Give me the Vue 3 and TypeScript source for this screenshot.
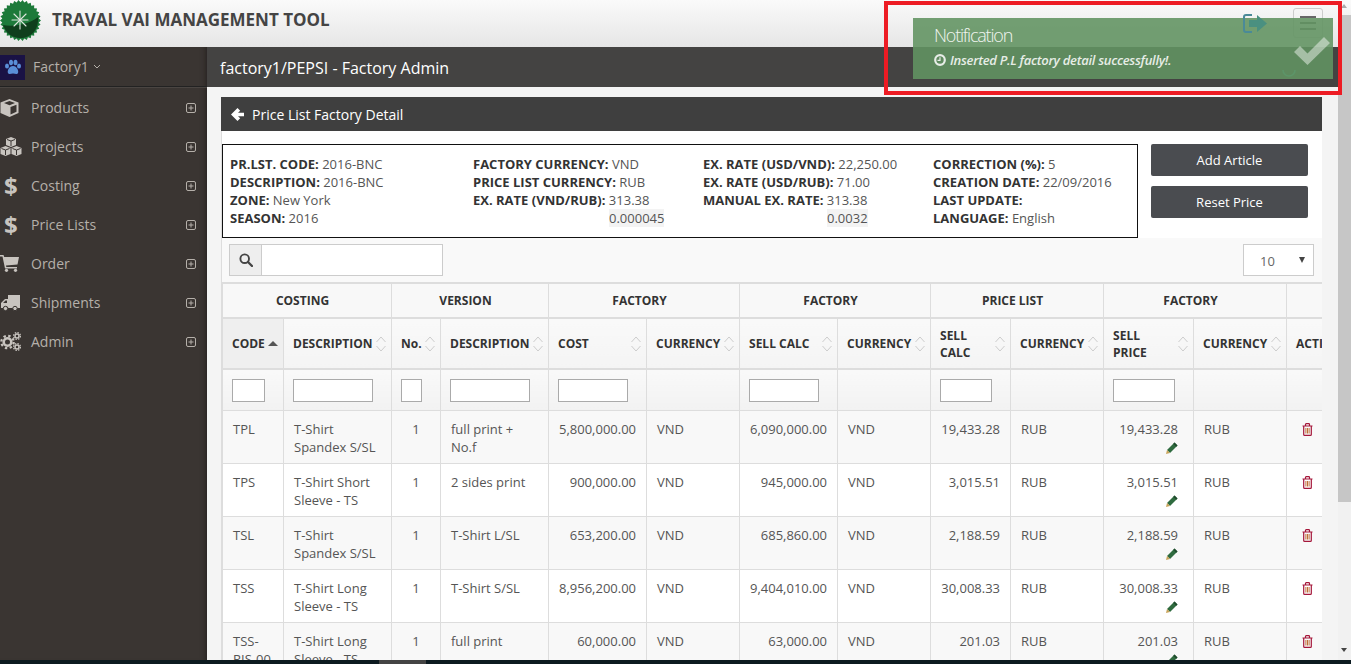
<template>
  <div class="app">
    <header class="topbar">
      <svg class="logo" width="41" height="41" viewBox="0 0 41 41">
        <path :d="logoPath" fill="#1d7a3a" />
        <path d="M3 25C12 27 28 25 38 17C39 30 31 38 20 38C12 38 6 33 3 25Z" fill="#0f3f1c" />
        <g stroke="#dfe6df" stroke-width="1.1" stroke-linecap="round">
          <line x1="20" y1="11" x2="20" y2="29" />
          <line x1="12" y1="20" x2="28" y2="20" />
          <line x1="14" y1="14" x2="26" y2="26" />
          <line x1="26" y1="14" x2="14" y2="26" />
        </g>
      </svg>
      <span class="brand">TRAVAL VAI MANAGEMENT TOOL</span>
      <svg class="signout" width="26" height="22" viewBox="0 0 26 22">
        <path d="M10 2H4Q2 2 2 4V17Q2 19 4 19H10" fill="none" stroke="#4a8a98" stroke-width="2" />
        <path d="M7 7H15V2L25 10.5L15 19V14H7Z" fill="#4a9080" />
      </svg>
      <div class="burger"><i></i><i></i><i></i></div>
    </header>

    <div class="body">
      <aside class="sidebar">
        <div class="account">
          <svg class="avatar" width="25" height="25" viewBox="0 0 25 25">
            <rect width="25" height="25" fill="#1a1245" />
            <g fill="#5a8fd8">
              <ellipse cx="7" cy="11" rx="2" ry="2.6" />
              <ellipse cx="11" cy="7.5" rx="2" ry="2.8" />
              <ellipse cx="15.5" cy="7.5" rx="2" ry="2.8" />
              <ellipse cx="19" cy="11" rx="2" ry="2.6" />
              <path d="M13 11C17 11 19 16 18 18C17 20 15 18.500 13 18.500C11 18.500 9 20 8 18C7 16 9 11 13 11Z" />
            </g>
          </svg>
          <span class="account-name">Factory1</span>
          <svg width="8" height="6" viewBox="0 0 8 6"><path d="M1 1L4 4L7 1" fill="none" stroke="#b5b0aa" stroke-width="1" /></svg>
        </div>
        <nav class="menu">
          <div v-for="item in menu" :key="item.label" class="menu-item">
            <span class="menu-icon">
              <svg v-if="item.icon === 'cube'" width="19" height="18" viewBox="0 0 19 18">
                <path fill-rule="evenodd" d="M9.500 0L18.500 3.500V14L9.500 18L.5 14V3.500ZM9.500 2L4 4L9.500 6.200L15 4ZM10.500 8V15.500L16.500 12.800V5.700Z" fill="#c8c4bf" />
              </svg>
              <svg v-else-if="item.icon === 'cubes'" width="22" height="19" viewBox="0 0 22 19">
                <g fill="#c8c4bf">
                  <path d="M11 0L16 2V8L11 10L6 8V2Z" />
                  <path d="M5.500 9L10.500 11V17L5.500 19L.5 17V11Z" />
                  <path d="M16.500 9L21.500 11V17L16.500 19L11.500 17V11Z" />
                </g>
                <g fill="none" stroke="#3a3532" stroke-width="1">
                  <path d="M7 2.500L11 4L15 2.500M11 4V9" />
                  <path d="M1.500 11.500L5.500 13L9.500 11.500M5.500 13V18" />
                  <path d="M12.500 11.500L16.500 13L20.500 11.500M16.500 13V18" />
                </g>
              </svg>
              <span v-else-if="item.icon === 'dollar'" class="dollar">$</span>
              <svg v-else-if="item.icon === 'cart'" width="19" height="17" viewBox="0 0 19 17">
                <path d="M0 0H3.500L4.200 2H19L17.500 9.500L6 10.500L6.300 12H17V13.500H5L2.500 1.500H0Z" fill="#c8c4bf" />
                <circle cx="6.500" cy="15.300" r="1.600" fill="#c8c4bf" />
                <circle cx="15.500" cy="15.300" r="1.600" fill="#c8c4bf" />
              </svg>
              <svg v-else-if="item.icon === 'truck'" width="20" height="16" viewBox="0 0 20 16">
                <path d="M8 0H20V13H8.500A3 3 0 0 0 3 13H1V8L5 4H8ZM3 8H7V5.500H5.500Z" fill="#c8c4bf" fill-rule="evenodd" />
                <circle cx="5.500" cy="13.500" r="2.200" fill="#c8c4bf" stroke="#3a3532" />
                <circle cx="15" cy="13.500" r="2.200" fill="#c8c4bf" stroke="#3a3532" />
              </svg>
              <svg v-else width="21" height="19" viewBox="0 0 21 19">
                <g fill="none" stroke="#c8c4bf">
                  <circle cx="7.500" cy="10" r="3.800" stroke-width="2.600" />
                  <circle cx="7.500" cy="10" r="6.200" stroke-width="2.200" stroke-dasharray="2.400 2.470" />
                  <circle cx="17" cy="4" r="2" stroke-width="1.500" />
                  <circle cx="17" cy="4" r="3.400" stroke-width="1.300" stroke-dasharray="1.500 1.170" />
                  <circle cx="17" cy="15" r="2" stroke-width="1.500" />
                  <circle cx="17" cy="15" r="3.400" stroke-width="1.300" stroke-dasharray="1.500 1.170" />
                </g>
              </svg>
            </span>
            <span class="menu-label">{{ item.label }}</span>
            <svg width="10" height="10" viewBox="0 0 10 10">
              <rect x=".5" y=".5" width="9" height="9" rx="1.500" fill="none" stroke="#b5b0aa" />
              <path d="M2.500 5H7.500M5 2.500V7.500" stroke="#b5b0aa" />
            </svg>
          </div>
        </nav>
      </aside>

      <main class="main">
        <div class="page-title">
          factory1/PEPSI - Factory Admin
          <svg class="spinner" width="16" height="16" viewBox="0 0 16 16">
            <path d="M2 8A6 6 0 0 0 14 8" fill="none" stroke="#2fa0a0" stroke-width="1.500" />
          </svg>
        </div>
        <div class="content">
          <section class="panel">
            <div class="panel-head">
              <svg width="13" height="13" viewBox="0 0 13 13">
                <path d="M6.500 0L9.200 2.700L7 4.700H13V8.300H7L9.200 10.300L6.500 13L0 6.500Z" fill="#fff" />
              </svg>
              <span>Price List Factory Detail</span>
            </div>
            <div class="summary">
              <div class="info-box">
                <div v-for="(col, i) in infoCols" :key="i" class="info-col">
                  <div v-for="line in col" :key="line.key" class="info-line" :class="{ muted: !line.key.trim() }">
                    <template v-if="line.key.trim()"><b>{{ line.key }}:</b> {{ line.value }}</template>
                    <span v-else class="rate" :style="{ marginLeft: line.offset + 'px' }">{{ line.value }}</span>
                  </div>
                </div>
              </div>
              <div class="actions">
                <button class="btn">Add Article</button>
                <button class="btn">Reset Price</button>
              </div>
            </div>
            <div class="toolbar">
              <div class="search">
                <span class="search-addon">
                  <svg width="14" height="14" viewBox="0 0 14 14">
                    <circle cx="5.700" cy="5.700" r="4.300" fill="none" stroke="#444" stroke-width="1.900" />
                    <path d="M9 9L13 13" stroke="#444" stroke-width="2.300" stroke-linecap="round" />
                  </svg>
                </span>
                <span class="search-input"></span>
              </div>
              <div class="page-size"><span>10</span><i></i></div>
            </div>
            <div class="table-wrap">
              <table class="grid">
                <colgroup>
                  <col v-for="(w, i) in colWidths" :key="i" :style="{ width: w + 'px' }" />
                </colgroup>
                <thead>
                  <tr class="group-row">
                    <th v-for="g in groups" :key="g.label + g.span" :colspan="g.span">{{ g.label }}</th>
                  </tr>
                  <tr class="head-row">
                    <th v-for="(c, i) in columns" :key="i" :class="{ sorted: c.sorted }">
                      <div class="th-inner">
                        <span class="th-label">{{ c.label }}</span>
                        <i v-if="c.sorted" class="sort-up"></i>
                        <svg v-else-if="!c.noSort" width="10" height="20" viewBox="0 0 10 20">
                          <path d="M.5 8L5 3L9.500 8M.5 12L5 17L9.500 12" fill="none" stroke="#ccc" />
                        </svg>
                      </div>
                    </th>
                  </tr>
                  <tr class="filter-row">
                    <td v-for="(c, i) in columns" :key="i">
                      <span v-if="c.filter" class="filter" :style="{ width: c.filter + 'px' }"></span>
                    </td>
                  </tr>
                </thead>
                <tbody>
                  <tr v-for="row in rows" :key="row.code">
                    <td class="code">{{ row.code }}</td>
                    <td>{{ row.desc }}</td>
                    <td class="center">1</td>
                    <td>{{ row.version }}</td>
                    <td class="num">{{ row.cost }}</td>
                    <td>VND</td>
                    <td class="num">{{ row.sell }}</td>
                    <td>VND</td>
                    <td class="num">{{ row.list }}</td>
                    <td>RUB</td>
                    <td class="num price">
                      {{ row.list }}
                      <svg class="pencil" width="12" height="12" viewBox="0 0 12 12">
                        <path d="M8.500 .5L11.500 3.500L4 11L1 8Z" fill="#2f6b3f" />
                        <path d="M8.500 .5L11.500 3.500L10.300 4.700L7.300 1.700Z" fill="#1f4a2c" />
                        <path d="M1 8L4 11L0 12Z" fill="#c9a45a" />
                      </svg>
                    </td>
                    <td>RUB</td>
                    <td class="action">
                      <svg width="11" height="13" viewBox="0 0 11 13">
                        <path d="M.5 3H10.500M3.500 3V1.500Q3.500 .7 4.300 .7H6.700Q7.500 .7 7.500 1.500V3M1.700 3V11.500Q1.700 12.400 2.600 12.400H8.400Q9.300 12.400 9.300 11.500V3" fill="none" stroke="#a5173a" stroke-width="1.200" />
                        <path d="M3.900 5V10.500M5.500 5V10.500M7.100 5V10.500" stroke="#c0703a" />
                      </svg>
                    </td>
                  </tr>
                </tbody>
              </table>
            </div>
          </section>
        </div>
      </main>
      <div class="scrollbar">
        <i class="arrow-up"></i>
        <div class="thumb"></div>
        <i class="arrow-down"></i>
      </div>
    </div>
    <div class="bottom-bar"><div class="bottom-thumb"></div></div>

    <div class="notify">
      <div class="notify-title">Notification</div>
      <div class="notify-text">
        <svg width="12" height="12" viewBox="0 0 12 12">
          <circle cx="6" cy="6" r="4.800" fill="none" stroke="#fff" stroke-width="2.200" />
          <path d="M6 3.200V6.300H3.500" fill="none" stroke="#fff" stroke-width="1.200" />
        </svg>
        <em>Inserted P.L factory detail successfully!.</em>
      </div>
      <svg class="notify-check" width="36" height="28" viewBox="0 0 36 28">
        <path d="M0 15L6 9L13.500 16.500L30 0L36 6L13.500 28Z" fill="#fff" fill-opacity=".45" />
      </svg>
    </div>
    <div class="highlight"></div>
  </div>
</template>

<script setup lang="ts">
interface Row {
  code: string;
  desc: string;
  version: string;
  cost: string;
  sell: string;
  list: string;
}

interface Column {
  label: string;
  filter?: number;
  sorted?: boolean;
  noSort?: boolean;
}

const menu = [
  { label: 'Products', icon: 'cube' },
  { label: 'Projects', icon: 'cubes' },
  { label: 'Costing', icon: 'dollar' },
  { label: 'Price Lists', icon: 'dollar' },
  { label: 'Order', icon: 'cart' },
  { label: 'Shipments', icon: 'truck' },
  { label: 'Admin', icon: 'cogs' },
];

const infoCols = [
  [
    { key: 'PR.LST. CODE', value: '2016-BNC', offset: 0 },
    { key: 'DESCRIPTION', value: '2016-BNC', offset: 0 },
    { key: 'ZONE', value: 'New York', offset: 0 },
    { key: 'SEASON', value: '2016', offset: 0 },
  ],
  [
    { key: 'FACTORY CURRENCY', value: 'VND', offset: 0 },
    { key: 'PRICE LIST CURRENCY', value: 'RUB', offset: 0 },
    { key: 'EX. RATE (VND/RUB)', value: '313.38', offset: 0 },
    { key: ' ', value: '0.000045', offset: 136 },
  ],
  [
    { key: 'EX. RATE (USD/VND)', value: '22,250.00', offset: 0 },
    { key: 'EX. RATE (USD/RUB)', value: '71.00', offset: 0 },
    { key: 'MANUAL EX. RATE', value: '313.38', offset: 0 },
    { key: ' ', value: '0.0032', offset: 124 },
  ],
  [
    { key: 'CORRECTION (%)', value: '5', offset: 0 },
    { key: 'CREATION DATE', value: '22/09/2016', offset: 0 },
    { key: 'LAST UPDATE', value: '', offset: 0 },
    { key: 'LANGUAGE', value: 'English', offset: 0 },
  ],
];

const colWidths = [61, 108, 49, 108, 98, 93, 98, 93, 80, 93, 90, 93, 70];

const groups = [
  { label: 'COSTING', span: 2 },
  { label: 'VERSION', span: 2 },
  { label: 'FACTORY', span: 2 },
  { label: 'FACTORY', span: 2 },
  { label: 'PRICE LIST', span: 2 },
  { label: 'FACTORY', span: 2 },
  { label: '', span: 1 },
];

const columns: Column[] = [
  { label: 'CODE', filter: 33, sorted: true },
  { label: 'DESCRIPTION', filter: 80 },
  { label: 'No.', filter: 21 },
  { label: 'DESCRIPTION', filter: 80 },
  { label: 'COST', filter: 70 },
  { label: 'CURRENCY' },
  { label: 'SELL CALC', filter: 70 },
  { label: 'CURRENCY' },
  { label: 'SELL\nCALC', filter: 52 },
  { label: 'CURRENCY' },
  { label: 'SELL\nPRICE', filter: 62 },
  { label: 'CURRENCY' },
  { label: 'ACTIONS', noSort: true },
];

const rows: Row[] = [
  { code: 'TPL', desc: 'T-Shirt Spandex S/SL', version: 'full print + No.f', cost: '5,800,000.00', sell: '6,090,000.00', list: '19,433.28' },
  { code: 'TPS', desc: 'T-Shirt Short Sleeve - TS', version: '2 sides print', cost: '900,000.00', sell: '945,000.00', list: '3,015.51' },
  { code: 'TSL', desc: 'T-Shirt Spandex S/SL', version: 'T-Shirt L/SL', cost: '653,200.00', sell: '685,860.00', list: '2,188.59' },
  { code: 'TSS', desc: 'T-Shirt Long Sleeve - TS', version: 'T-Shirt S/SL', cost: '8,956,200.00', sell: '9,404,010.00', list: '30,008.33' },
  { code: 'TSS-\nRIS-00', desc: 'T-Shirt Long Sleeve - TS', version: 'full print', cost: '60,000.00', sell: '63,000.00', list: '201.03' },
];

// 徽章外圈的锯齿
const logoPath = (() => {
  const teeth = 30;
  const pts: string[] = [];
  for (let i = 0; i < teeth * 2; i++) {
    const r = i % 2 === 0 ? 20.5 : 18.3;
    const a = (i / (teeth * 2)) * Math.PI * 2;
    pts.push(`${(20.5 + r * Math.cos(a)).toFixed(2)} ${(20.5 + r * Math.sin(a)).toFixed(2)}`);
  }
  return 'M' + pts.join('L') + 'Z';
})();
</script>

<style scoped>
.app {
  position: relative;
  display: flex;
  flex-direction: column;
  width: 1351px;
  height: 664px;
  overflow: hidden;
  font-family: "Open Sans", "Liberation Sans", sans-serif;
  font-size: 13px;
  color: #555;
}

.topbar {
  position: relative;
  flex: none;
  display: flex;
  align-items: flex-start;
  height: 47px;
  background: linear-gradient(#fafafa, #e6e6e6);
}

.logo {
  flex: none;
}

.brand {
  margin: 9px 0 0 11px;
  font-size: 17px;
  line-height: 22px;
  font-weight: 700;
  color: #444;
}

.signout {
  position: relative;
  z-index: 1;
  margin: 13px 0 0 auto;
}

.burger {
  display: flex;
  flex-direction: column;
  justify-content: center;
  gap: 4px;
  width: 30px;
  height: 30px;
  box-sizing: border-box;
  margin: 8px 28px 0 25px;
  padding: 0 6px;
  border: 1px solid #ccc;
  border-radius: 3px;
}

.burger i {
  display: block;
  height: 2px;
  background: #666;
}

.body {
  flex: 1;
  display: flex;
  min-height: 0;
}

.sidebar {
  flex: none;
  width: 207px;
  background: #3a3532;
  box-shadow: inset -6px 0 6px -6px #1e1b19;
  color: #b5b0aa;
  font-size: 14px;
}

.account {
  display: flex;
  align-items: center;
  gap: 8px;
  height: 40px;
  box-sizing: border-box;
  border-bottom: 1px solid #222;
  box-shadow: 0 1px 0 #4a4542;
}

.avatar {
  margin-top: 2px;
}

.account-name {
  margin-right: -4px;
}

.menu {
  padding-top: 1px;
}

.menu-item {
  display: flex;
  align-items: center;
  height: 39px;
  padding-right: 11px;
}

.menu-icon {
  flex: none;
  display: flex;
  align-items: center;
  justify-content: flex-start;
  width: 31px;
}

.dollar {
  margin-left: 4px;
  font-size: 24px;
  line-height: 24px;
  font-weight: 700;
  color: #c8c4bf;
}

.menu-label {
  flex: 1;
}

.main {
  flex: 1;
  min-width: 0;
  display: flex;
  flex-direction: column;
}

.page-title {
  position: relative;
  flex: none;
  height: 40px;
  padding-left: 13px;
  background: #444342;
  color: #fff;
  font-size: 16px;
  line-height: 42px;
}

.spinner {
  position: absolute;
  right: 41px;
  top: 15px;
}

.content {
  flex: 1;
  min-height: 0;
  padding: 10px 16px 0 14px;
  background: #f4f4f4;
  overflow: hidden;
}

.panel {
  display: flex;
  flex-direction: column;
  background: #fff;
  border-left: 1px solid #ddd;
}

.panel-head {
  display: flex;
  align-items: center;
  gap: 8px;
  height: 34px;
  margin-left: -1px;
  padding-left: 10px;
  background: #3f3f3f;
  color: #fff;
  font-size: 14px;
}

.summary {
  display: flex;
  gap: 13px;
  padding: 13px 14px 0 0;
}

.info-box {
  flex: 1;
  display: grid;
  grid-template-columns: 243px 230px 230px 1fr;
  padding: 10px 7px;
  border: 1px solid #111;
  line-height: 18px;
  color: #555;
}

.info-line {
  height: 18px;
  white-space: nowrap;
}

.info-line b {
  color: #333;
}

.rate {
  display: inline-block;
  background: #f3f3f3;
}

.actions {
  flex: none;
  display: flex;
  flex-direction: column;
  gap: 10px;
  width: 157px;
}

.btn {
  height: 32px;
  padding: 0;
  border: none;
  border-radius: 2px;
  background: #4a4c50;
  color: #fff;
  font: inherit;
}

.toolbar {
  display: flex;
  justify-content: space-between;
  height: 45px;
  box-sizing: border-box;
  padding: 6px 8px 0 7px;
  background: #f9f9f9;
  border-bottom: 1px solid #ddd;
}

.search {
  display: flex;
  width: 214px;
  height: 32px;
  box-sizing: border-box;
  border: 1px solid #ccc;
  background: #fff;
}

.search-addon {
  display: flex;
  align-items: center;
  justify-content: center;
  width: 31px;
  background: #eee;
  border-right: 1px solid #ccc;
}

.search-input {
  flex: 1;
}

.page-size {
  position: relative;
  width: 71px;
  height: 32px;
  box-sizing: border-box;
  padding-left: 16px;
  border: 1px solid #ccc;
  background: #fff;
  line-height: 33px;
  color: #666;
}

.page-size i {
  position: absolute;
  right: 8px;
  top: 12px;
  border-left: 3px solid transparent;
  border-right: 3px solid transparent;
  border-top: 6px solid #444;
}

.table-wrap {
  overflow: hidden;
}

.grid {
  width: 1134px;
  table-layout: fixed;
  border-collapse: collapse;
  background: #fff;
}

.grid th {
  padding: 0;
  border: 1px solid #ddd;
  border-bottom-width: 2px;
  color: #333;
  font-size: 12px;
  line-height: 17px;
  font-weight: 700;
}

.group-row th {
  height: 33px;
  padding-right: 9px;
  background: #f8f8f8;
  text-align: center;
}

.head-row th {
  height: 49px;
  background: linear-gradient(#f9f9f9, #f4f4f4);
  text-align: left;
}

.head-row th.sorted {
  background: #efefef;
}

.th-inner {
  display: flex;
  align-items: center;
  justify-content: space-between;
  padding: 0 5px 0 9px;
}

.th-label {
  white-space: pre-line;
}

.th-inner svg {
  flex: none;
}

.sort-up {
  flex: none;
  margin-right: 0;
  border-left: 5px solid transparent;
  border-right: 5px solid transparent;
  border-bottom: 5px solid #555;
}

.filter-row td {
  height: 41px;
  padding: 2px 0 0 9px;
  background: linear-gradient(#f9f9f9, #f2f2f2);
  border-bottom-width: 2px;
}

.filter {
  display: block;
  height: 23px;
  box-sizing: border-box;
  border: 1px solid #aaa;
  background: #fff;
}

.grid td {
  border: 1px solid #ddd;
  box-sizing: border-box;
  line-height: 18px;
}

tbody td {
  height: 53px;
  padding: 9px 10px 7px;
  vertical-align: top;
}

tbody tr:nth-child(odd) td {
  background: #f8f8f8;
}

tbody td.code {
  white-space: pre;
}

tbody td.center {
  text-align: center;
}

tbody td.num {
  text-align: right;
}

tbody td.price {
  padding-right: 15px;
}

.pencil {
  display: block;
  margin: 4px 0 0 auto;
}

tbody td.action {
  padding-top: 12px;
  padding-left: 15px;
}

.action svg {
  display: block;
}

.scrollbar {
  position: relative;
  flex: none;
  width: 13px;
  background: #f1f1f1;
}

.thumb {
  position: absolute;
  left: 0;
  right: 0;
  top: -32px;
  height: 487px;
  background: #c6c6c6;
}

.arrow-up,
.arrow-down {
  position: absolute;
  left: 3px;
  border-left: 3.500px solid transparent;
  border-right: 3.500px solid transparent;
}

.arrow-up {
  top: -43px;
  border-bottom: 4px solid #aaa;
}

.arrow-down {
  bottom: 8px;
  border-top: 4px solid #444;
}

.bottom-bar {
  flex: none;
  height: 4px;
  background: #0c1a20;
}

.bottom-thumb {
  width: 47px;
  height: 4px;
  margin-left: 379px;
  background: #444;
}

.notify {
  position: absolute;
  left: 913px;
  top: 18px;
  width: 420px;
  height: 61px;
  box-sizing: border-box;
  padding: 6px 0 0 21px;
  background: rgba(98, 147, 98, 0.89);
  color: #fff;
}

.notify-title {
  font-size: 18px;
  line-height: 22px;
  letter-spacing: -1.2px;
  font-weight: 300;
  opacity: 0.9;
}

.notify-text {
  display: flex;
  align-items: center;
  gap: 4px;
  margin-top: 5px;
  font-size: 13px;
  line-height: 18px;
  letter-spacing: -0.28px;
  font-weight: 600;
  opacity: 0.85;
}

.notify-check {
  position: absolute;
  right: 3px;
  top: 19px;
}

.highlight {
  position: absolute;
  left: 884px;
  top: 1px;
  width: 458px;
  height: 94px;
  box-sizing: border-box;
  border: 4px solid #ed1c24;
}
</style>

<style>
html,
body {
  margin: 0;
  overflow: hidden;
}
</style>
